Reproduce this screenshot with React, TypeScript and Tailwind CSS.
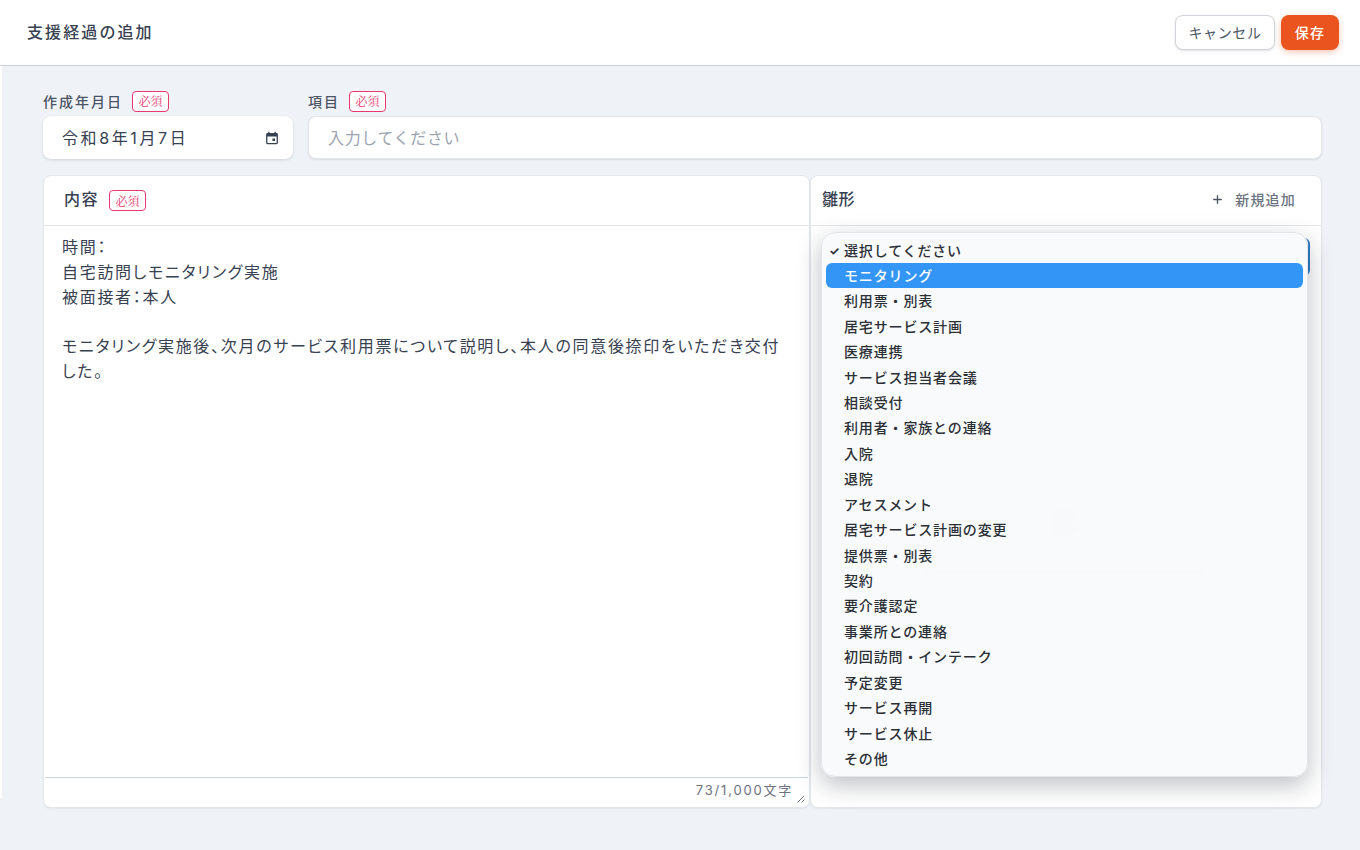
import React from 'react';
import { Plus } from 'lucide-react';

const OPTIONS = [
  '利用票・別表',
  '居宅サービス計画',
  '医療連携',
  'サービス担当者会議',
  '相談受付',
  '利用者・家族との連絡',
  '入院',
  '退院',
  'アセスメント',
  '居宅サービス計画の変更',
  '提供票・別表',
  '契約',
  '要介護認定',
  '事業所との連絡',
  '初回訪問・インテーク',
  '予定変更',
  'サービス再開',
  'サービス休止',
  'その他',
];

const RequiredBadge = () => (
  <span className="inline-flex h-[21px] w-[37px] items-center justify-center rounded-[4px] border border-[#e8396f] bg-white text-[12px] font-normal leading-none tracking-normal text-[#e8396f] font-['Noto_Serif_CJK_JP','Noto_Sans_CJK_JP',sans-serif]">
    必須
  </span>
);

const CalendarIcon = () => (
  <svg width="14" height="14" viewBox="0 0 14 14" className="text-[#374151]" fill="currentColor">
    <path d="M3.2 0.8h1.3v1.1h5V0.8h1.3v1.1h0.7c.8 0 1.4.6 1.4 1.4v8.5c0 .8-.6 1.4-1.4 1.4H2.5c-.8 0-1.4-.6-1.4-1.4V3.3c0-.8.6-1.4 1.4-1.4h.7V0.8zM2.4 5.4v6.4c0 .1.1.2.2.2h8.8c.1 0 .2-.1.2-.2V5.4H2.4z" />
    <rect x="7.4" y="7.4" width="2.6" height="2.6" rx="0.4" />
  </svg>
);

const App: React.FC = () => {
  return (
    <div className="flex h-[850px] w-[1360px] flex-col overflow-hidden bg-[#eff2f7] text-[#374151] font-['Inter','Noto_Sans_CJK_JP',sans-serif]">
      <header className="flex h-[66px] shrink-0 items-center justify-between border-b border-[#c9ced6] bg-white pl-[27px] pr-[21px]">
        <h1 className="-mt-[2px] text-[16px] font-medium tracking-[2.1px] text-[#374151]">支援経過の追加</h1>
        <div className="flex items-center gap-[6px]">
          <button className="h-[35px] w-[100px] rounded-[8px] border border-[#d1d5db] bg-white text-[14px] tracking-[0.6px] text-[#4b5563] shadow-sm">
            キャンセル
          </button>
          <button className="h-[35px] w-[58px] rounded-[8px] bg-[#ea551f] text-[14px] font-medium tracking-[1.2px] text-white shadow-[0_2px_6px_rgba(234,85,31,0.35)]">
            保存
          </button>
        </div>
      </header>

      <main className="relative flex flex-1 flex-col pl-[43px] pr-[38px] pt-[24px]">
        <div className="absolute left-0 top-0 h-[732px] w-[2px] bg-white" />
        <div className="flex gap-[15px]">
          <div className="flex w-[250px] flex-col gap-[4px]">
            <label className="flex h-[22px] items-center gap-[9px] text-[14px] font-medium tracking-[2px] text-[#4b5563]">
              作成年月日 <RequiredBadge />
            </label>
            <div className="flex h-[43px] items-center justify-between rounded-[8px] bg-white pl-[19px] pr-[14px] shadow-[0_1px_3px_rgba(17,24,39,0.14)]">
              <span className="text-[16px] tracking-[2.6px] text-[#374151]">令和8年1月7日</span>
              <CalendarIcon />
            </div>
          </div>
          <div className="flex flex-1 flex-col gap-[4px]">
            <label className="flex h-[22px] items-center gap-[9px] text-[14px] font-medium tracking-[2px] text-[#4b5563]">
              項目 <RequiredBadge />
            </label>
            <div className="flex h-[43px] items-center rounded-[8px] border border-[#e2e5ea] bg-white pl-[19px] shadow-[0_1px_2px_rgba(17,24,39,0.1)]">
              <span className="text-[16px] tracking-[0.64px] text-[#9ca3af]">入力してください</span>
            </div>
          </div>
        </div>

        <div className="mt-[16px] flex h-[633px]">
          <section className="flex w-[767px] flex-col rounded-[8px] border border-[#e3e6eb] bg-white shadow-[0_1px_2px_rgba(17,24,39,0.06)]">
            <div className="flex h-[50px] shrink-0 items-center gap-[10px] border-b border-[#e5e7eb] pl-[20px]">
              <h2 className="-mt-[3px] text-[16px] font-medium tracking-[1.5px] text-[#374151]">内容</h2>
              <RequiredBadge />
            </div>
            <div className="flex-1 pl-[18px] pr-[20px] pt-[9px] text-[16px] leading-[25px] tracking-[1.7px] text-[#374151] [font-feature-settings:'palt']">
              <p>時間：</p>
              <p>自宅訪問しモニタリング実施</p>
              <p>被面接者：本人</p>
              <p className="mt-[24px]">
                モニタリング実施後、次月のサービス利用票について説明し、本人の同意後捺印をいただき交付した。
              </p>
            </div>
            <div className="relative mx-px flex h-[30px] shrink-0 items-center justify-end border-t border-[#cfd3da] pb-[3px] pr-[15px] text-[13px] tracking-[1.8px] text-[#6b7280]">
              73/1,000文字
              <svg width="8" height="8" viewBox="0 0 8 8" className="absolute bottom-[4px] right-[3px] text-[#6b7280]" stroke="currentColor" fill="none">
                <path d="M0.5 7.5 L7 1 M4.5 7.5 L7.5 4.5" />
              </svg>
            </div>
          </section>

          <section className="relative flex flex-1 flex-col rounded-[8px] border border-[#e3e6eb] bg-white shadow-[0_1px_2px_rgba(17,24,39,0.06)]">
            <div className="flex h-[50px] shrink-0 items-center justify-between border-b border-[#e5e7eb] pl-[11px] pr-[25px]">
              <h2 className="-mt-[3px] text-[16px] font-medium tracking-[0.5px] text-[#374151]">雛形</h2>
              <button className="-mt-[2px] flex items-center gap-[11px] text-[14px] font-medium tracking-[1.2px] text-[#6b7280]">
                <Plus size={13} strokeWidth={2.5} className="text-[#4b5563]" />
                新規追加
              </button>
            </div>

            {/* select behind the open menu */}
            <div className="absolute left-[11px] top-[62px] h-[38px] w-[488px] rounded-[6px] border-r-2 border-[#2f7fc8]" />
            <div className="absolute left-[104px] top-[330px] flex w-[300px] flex-col items-center gap-[26px] blur-[6px]">
              <div className="h-[34px] w-[34px] rounded-full bg-[#dbe3ee]" />
              <div className="h-[12px] w-[296px] rounded bg-[#dbe3ee]" />
            </div>

            {/* open dropdown menu */}
            <div className="absolute left-[10px] top-[56px] flex h-[545px] w-[487px] flex-col rounded-[14px] border border-[#e2e4e8] bg-[#f9fafb]/95 px-[4px] pt-[5px] text-[14px] font-medium tracking-[0.85px] text-[#2b2f36] shadow-[0_8px_24px_rgba(17,24,39,0.28)]">
              <div className="relative flex h-[25px] shrink-0 items-center pl-[18px]">
                <span className="absolute left-[3px] text-[12px] font-bold leading-none">✓</span>
                選択してください
              </div>
              <div className="flex h-[25px] shrink-0 items-center rounded-[6px] bg-[#3395f5] pl-[18px] text-white">
                モニタリング
              </div>
              {OPTIONS.map(option => (
                <div key={option} className="flex h-[25.45px] shrink-0 items-center pl-[18px]">
                  {option}
                </div>
              ))}
            </div>
          </section>
        </div>
      </main>
    </div>
  );
};

export default App;
